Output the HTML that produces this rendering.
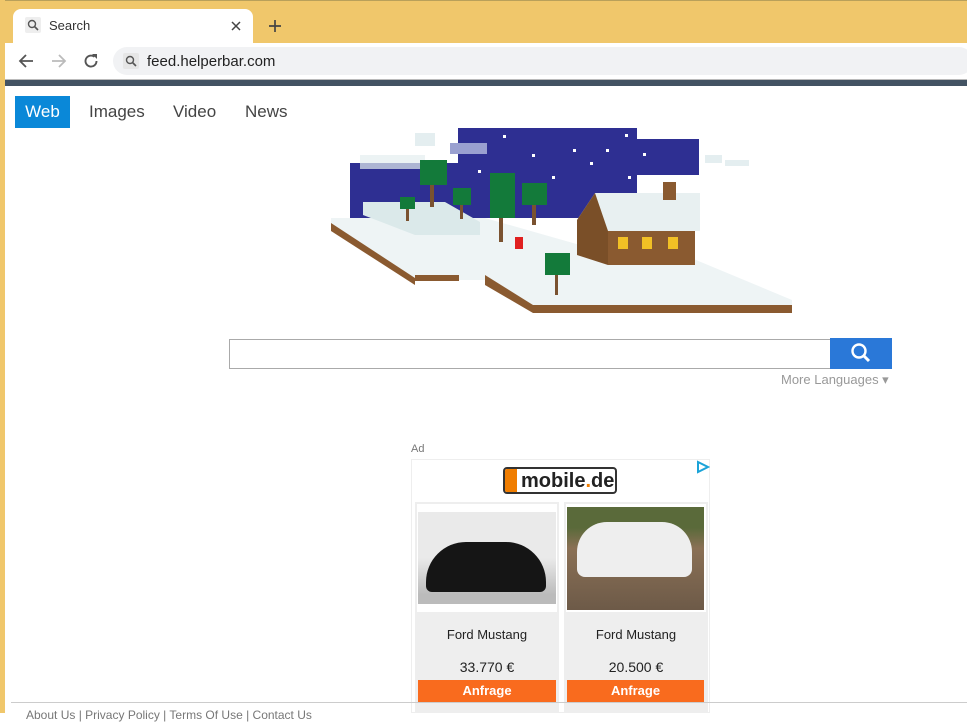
<!DOCTYPE html>
<html><head><meta charset="utf-8"><style>
*{margin:0;padding:0;box-sizing:border-box}
body{width:967px;height:713px;overflow:hidden;background:#fff;font-family:"Liberation Sans",Arial,sans-serif;position:relative}
.abs{position:absolute}
</style></head><body>
<div class="abs" style="left:0;top:0;width:967px;height:43px;background:#f0c76b;border-top:1px solid #b9a05a"></div>
<div class="abs" style="left:0;top:0;width:5px;height:713px;background:#f0c76b"></div>
<div class="abs" style="left:13px;top:9px;width:240px;height:36px;background:#fff;border-radius:8px 8px 0 0"></div>
<div class="abs" style="left:25px;top:17px;width:16px;height:16px;background:#eee;border-radius:2px"><svg width="16" height="16"><circle cx="7" cy="7" r="3.5" fill="none" stroke="#555" stroke-width="1.4"/><path d="M9.5 9.5L13 13" stroke="#555" stroke-width="1.6"/></svg></div>
<div class="abs" style="left:49px;top:18px;font-size:13px;color:#333">Search</div>
<svg class="abs" style="left:230px;top:20px" width="12" height="12"><path d="M2 2L10 10M10 2L2 10" stroke="#444" stroke-width="1.5"/></svg>
<svg class="abs" style="left:267px;top:18px" width="16" height="16"><path d="M8 2V14M2 8H14" stroke="#444" stroke-width="1.7"/></svg>
<div class="abs" style="left:5px;top:43px;width:962px;height:36px;background:#fff"></div>
<svg class="abs" style="left:17px;top:52px" width="18" height="18"><path d="M16 9H3M9 3L3 9L9 15" fill="none" stroke="#555" stroke-width="1.8"/></svg>
<svg class="abs" style="left:50px;top:52px" width="18" height="18"><path d="M2 9H15M9 3L15 9L9 15" fill="none" stroke="#bbb" stroke-width="1.8"/></svg>
<svg class="abs" style="left:82px;top:52px" width="18" height="18"><path d="M14.5 9A5.5 5.5 0 1 1 12.5 4.8" fill="none" stroke="#555" stroke-width="1.9"/><path d="M10 2H15V7Z" fill="#555"/></svg>
<div class="abs" style="left:113px;top:47px;width:860px;height:28px;background:#f1f2f4;border-radius:14px"></div>
<div class="abs" style="left:123px;top:53px;width:16px;height:16px;background:#e6e6e6;border-radius:2px"><svg width="16" height="16"><circle cx="7" cy="7" r="3.5" fill="none" stroke="#555" stroke-width="1.4"/><path d="M9.5 9.5L13 13" stroke="#555" stroke-width="1.6"/></svg></div>
<div class="abs" style="left:147px;top:53px;font-size:15px;color:#222">feed.helperbar.com</div>
<div class="abs" style="left:5px;top:79px;width:962px;height:1px;background:#bbb"></div>
<div class="abs" style="left:5px;top:80px;width:962px;height:6px;background:#435363"></div>

<div class="abs" style="left:15px;top:96px;width:55px;height:32px;background:#0a88d8;color:#fff;font-size:17px;line-height:32px;text-align:center">Web</div>
<div class="abs" style="left:89px;top:102px;font-size:17px;color:#444">Images</div>
<div class="abs" style="left:173px;top:102px;font-size:17px;color:#444">Video</div>
<div class="abs" style="left:245px;top:102px;font-size:17px;color:#444">News</div>

<svg class="abs" style="left:325px;top:125px" width="475" height="190">
<rect x="133" y="3" width="179" height="90" fill="#2e2f92"/>
<rect x="312" y="14" width="62" height="36" fill="#2e2f92"/>
<rect x="25" y="38" width="110" height="55" fill="#2e2f92"/>
<rect x="35" y="30" width="65" height="14" fill="#e4eef0" opacity=".7"/>
<rect x="125" y="18" width="37" height="11" fill="#9aa0d0"/>
<rect x="90" y="8" width="20" height="13" fill="#e4eef0"/>
<rect x="380" y="30" width="17" height="8" fill="#e4eef0"/>
<rect x="400" y="35" width="24" height="6" fill="#e4eef0"/>
<g fill="#fff"><rect x="178" y="10" width="3" height="3"/><rect x="207" y="29" width="3" height="3"/><rect x="248" y="24" width="3" height="3"/><rect x="281" y="24" width="3" height="3"/><rect x="300" y="9" width="3" height="3"/><rect x="318" y="28" width="3" height="3"/><rect x="265" y="37" width="3" height="3"/><rect x="227" y="51" width="3" height="3"/><rect x="303" y="51" width="3" height="3"/><rect x="153" y="45" width="3" height="3"/></g>
<polygon points="6,93 160,93 255,120 335,120 467,175 467,180 208,180 160,155 90,155 6,100" fill="#eef4f5"/>
<polygon points="38,77 120,77 155,97 155,110 90,110 38,90" fill="#dbe9ea"/>
<polygon points="6,98 90,153 90,160 6,106" fill="#8a5a30"/>
<polygon points="160,150 208,180 208,188 160,160" fill="#8a5a30"/>
<rect x="208" y="180" width="259" height="8" fill="#8a5a30"/>
<rect x="90" y="150" width="44" height="6" fill="#8a5a30"/>
<polygon points="252,95 270,68 375,68 375,106 283,106" fill="#e8f0f1"/>
<rect x="283" y="106" width="87" height="34" fill="#8a5a30"/>
<polygon points="252,95 270,68 283,106 283,140 252,130" fill="#7a4f28"/>
<rect x="338" y="57" width="13" height="18" fill="#8a5a30"/>
<rect x="293" y="112" width="10" height="12" fill="#f2c025"/>
<rect x="317" y="112" width="10" height="12" fill="#f2c025"/>
<rect x="343" y="112" width="10" height="12" fill="#f2c025"/>
<g fill="#137a3a">
<rect x="95" y="35" width="27" height="25"/><rect x="128" y="63" width="18" height="17"/>
<rect x="75" y="72" width="15" height="12"/><rect x="165" y="48" width="25" height="45"/>
<rect x="197" y="58" width="25" height="22"/><rect x="220" y="128" width="25" height="22"/>
</g>
<g fill="#7a5230">
<rect x="105" y="60" width="4" height="22"/><rect x="135" y="80" width="3" height="14"/>
<rect x="81" y="84" width="3" height="12"/><rect x="174" y="93" width="4" height="24"/>
<rect x="207" y="80" width="4" height="20"/><rect x="230" y="150" width="3" height="20"/>
</g>
<rect x="190" y="112" width="8" height="12" fill="#e02020"/>
</svg>

<div class="abs" style="left:229px;top:339px;width:602px;height:30px;border:1px solid #aaa;border-right:none"></div>
<div class="abs" style="left:830px;top:338px;width:62px;height:31px;background:#2a78d8"><svg width="62" height="31"><circle cx="29" cy="13" r="6.5" fill="none" stroke="#fff" stroke-width="2.4"/><path d="M33.5 17.5L39 23" stroke="#fff" stroke-width="3"/></svg></div>
<div class="abs" style="left:781px;top:372px;font-size:13px;color:#999">More Languages ▾</div>

<div class="abs" style="left:411px;top:443px;font-size:11px;color:#777">Ad</div>
<div class="abs" style="left:411px;top:459px;width:299px;height:254px;border:1px solid #eee"></div>
<svg class="abs" style="left:696px;top:460px" width="14" height="14"><path d="M2 2L12 7L2 12Z" fill="none" stroke="#1ba3d8" stroke-width="2"/></svg>
<div class="abs" style="left:503px;top:467px;width:114px;height:27px;border:2px solid #333;border-radius:4px;background:#fff;overflow:hidden"><div style="position:absolute;left:0;top:0;width:12px;height:25px;background:#f07d00"></div><div style="position:absolute;left:16px;top:1px;font-size:20px;font-weight:bold;color:#222">mobile<span style="color:#f07d00">.</span>de</div></div>
<div class="abs" style="left:415px;top:502px;width:144px;height:211px;background:#eee"></div>
<div class="abs" style="left:564px;top:502px;width:144px;height:211px;background:#eee"></div>
<div class="abs" style="left:417px;top:504px;width:140px;height:108px;background:#fff"></div>
<div class="abs" style="left:418px;top:512px;width:138px;height:92px;background:linear-gradient(#eaeaea 50%,#bbb 90%)"><div style="position:absolute;left:8px;top:30px;width:120px;height:50px;background:#151515;border-radius:40px 40px 6px 6px"></div></div>
<div class="abs" style="left:566px;top:504px;width:140px;height:108px;background:#fff"></div>
<div class="abs" style="left:567px;top:507px;width:137px;height:103px;background:linear-gradient(#5a6a3a 20%,#8a7055 40%,#6d5a48)"><div style="position:absolute;left:10px;top:15px;width:115px;height:55px;background:#eee;border-radius:30px 30px 8px 8px"></div></div>
<div class="abs" style="left:415px;top:627px;width:144px;text-align:center;font-size:13px;color:#222">Ford Mustang</div>
<div class="abs" style="left:564px;top:627px;width:144px;text-align:center;font-size:13px;color:#222">Ford Mustang</div>
<div class="abs" style="left:415px;top:659px;width:144px;text-align:center;font-size:14px;color:#222">33.770 €</div>
<div class="abs" style="left:564px;top:659px;width:144px;text-align:center;font-size:14px;color:#222">20.500 €</div>
<div class="abs" style="left:418px;top:680px;width:138px;height:22px;background:#f96b1e;color:#fff;font-weight:bold;font-size:13px;text-align:center;line-height:22px">Anfrage</div>
<div class="abs" style="left:567px;top:680px;width:137px;height:22px;background:#f96b1e;color:#fff;font-weight:bold;font-size:13px;text-align:center;line-height:22px">Anfrage</div>
<div class="abs" style="left:11px;top:702px;width:956px;height:1px;background:#ccc"></div>
<div class="abs" style="left:26px;top:708px;font-size:12px;color:#777;white-space:nowrap">About Us | Privacy Policy | Terms Of Use | Contact Us</div>
</body></html>
